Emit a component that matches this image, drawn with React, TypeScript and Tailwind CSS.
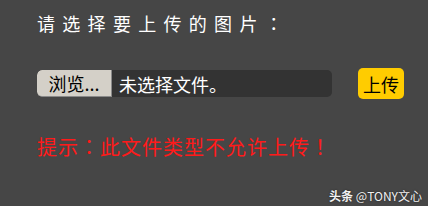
export default function App() {
  return (
    <div
      className="relative h-[206px] w-[428px] overflow-hidden bg-[#464646] pl-[37px] pt-[12px]"
      style={{ fontFamily: '"Noto Sans CJK SC", "Liberation Sans", sans-serif' }}
    >
      {/* Title */}
      <div className="h-[22px] text-[18px] leading-[22px] tracking-[7.3px] text-white">
        请选择要上传的图片
        <span className="font-['Noto_Sans_CJK_TC',sans-serif]">：</span>
      </div>

      {/* File picker row */}
      <div className="mt-[34px] flex items-center">
        <div className="flex h-[27px] w-[295px] items-stretch overflow-hidden rounded-[5px] bg-[#333333]">
          <div className="flex w-[75px] items-center justify-center rounded-l-[5px] border-r border-b border-[#8a8a8a] bg-[#d4d0c8] text-[18px] leading-none text-black">
            浏览...
          </div>
          <div className="flex items-center pl-[7px] text-[18px] leading-none text-white">
            未选择文件。
          </div>
        </div>
        <button className="ml-[26px] flex h-[31px] w-[46px] items-center justify-center rounded-[5px] bg-[#ffcc00] text-[18px] leading-none text-black">
          上传
        </button>
      </div>

      {/* Error message */}
      <div className="mt-[36px] text-[20px] leading-[24px] tracking-[1px] text-[#ff1a1a]">
        提示<span className="font-['Noto_Sans_CJK_TC',sans-serif]">：</span>
        此文件类型不允许上传
        <span className="font-['Noto_Sans_CJK_TC',sans-serif]">！</span>
      </div>

      {/* Watermark */}
      <div className="absolute bottom-[3px] right-[6px] text-[12px] font-bold leading-[14px] text-[#f2f2f2] [text-shadow:0_0_2px_rgba(0,0,0,0.6)]">
        头条 <span className="font-normal">@TONY文心</span>
      </div>
    </div>
  );
}
